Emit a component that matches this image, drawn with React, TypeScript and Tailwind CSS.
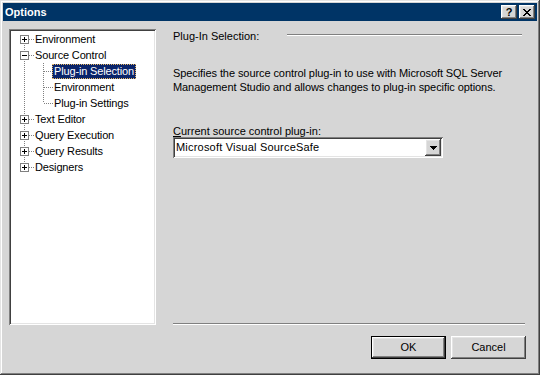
import React from "react";

const raised =
  "shadow-[inset_-1px_-1px_#404040,inset_1px_1px_#ffffff,inset_-2px_-2px_#808080,inset_2px_2px_#e4e4e4]";
const sunken =
  "shadow-[inset_1px_1px_#808080,inset_-1px_-1px_#ffffff,inset_2px_2px_#404040,inset_-2px_-2px_#e4e4e4]";

type Node = {
  label: string;
  level: number;
  box?: "plus" | "minus";
  selected?: boolean;
  first?: boolean;
  last?: boolean;
  lastChild?: boolean;
};

const nodes: Node[] = [
  { label: "Environment", level: 0, box: "plus", first: true },
  { label: "Source Control", level: 0, box: "minus" },
  { label: "Plug-in Selection", level: 1, selected: true },
  { label: "Environment", level: 1 },
  { label: "Plug-in Settings", level: 1, lastChild: true },
  { label: "Text Editor", level: 0, box: "plus" },
  { label: "Query Execution", level: 0, box: "plus" },
  { label: "Query Results", level: 0, box: "plus" },
  { label: "Designers", level: 0, box: "plus", last: true },
];

function Cell({
  vTop,
  vBottom,
  horiz,
  box,
}: {
  vTop: boolean;
  vBottom: boolean;
  horiz: boolean;
  box?: "plus" | "minus";
}) {
  return (
    <svg width="19" height="16" className="shrink-0" shapeRendering="crispEdges">
      {vTop && (
        <line x1="9.5" y1="0" x2="9.5" y2="8" stroke="#808080" strokeDasharray="1 1" />
      )}
      {vBottom && (
        <line x1="9.5" y1="8" x2="9.5" y2="16" stroke="#808080" strokeDasharray="1 1" />
      )}
      {horiz && (
        <line x1="10" y1="8.5" x2="19" y2="8.5" stroke="#808080" strokeDasharray="1 1" />
      )}
      {box && (
        <g>
          <rect x="5.5" y="4.5" width="8" height="8" fill="#ffffff" stroke="#808080" />
          <line x1="7" y1="8.5" x2="12" y2="8.5" stroke="#000000" />
          {box === "plus" && <line x1="9.5" y1="6" x2="9.5" y2="11" stroke="#000000" />}
        </g>
      )}
    </svg>
  );
}

function TreeRow({ node }: { node: Node }) {
  return (
    <div className="flex h-[16px] items-center">
      {node.level === 0 ? (
        <Cell vTop={!node.first} vBottom={!node.last} horiz box={node.box} />
      ) : (
        <>
          <Cell vTop vBottom horiz={false} />
          <Cell vTop vBottom={!node.lastChild} horiz />
        </>
      )}
      <span
        className={
          node.selected
            ? "ml-[-1px] h-[15px] px-[1px] leading-[13px] tracking-[-0.15px] bg-[#0a246a] text-white border border-dotted border-[#e8b860]"
            : "ml-[-1px] h-[15px] px-[2px] leading-[15px] tracking-[-0.15px] text-black"
        }
      >
        {node.label}
      </span>
    </div>
  );
}

function Button({ label, isDefault }: { label: string; isDefault?: boolean }) {
  if (isDefault) {
    return (
      <div className="w-[75px] h-[23px] border border-black">
        <div className={`w-full h-full flex items-center justify-center bg-[#d6d6d6] ${raised}`}>
          {label}
        </div>
      </div>
    );
  }
  return (
    <div className={`w-[75px] h-[23px] flex items-center justify-center bg-[#d6d6d6] ${raised}`}>
      {label}
    </div>
  );
}

export default function App() {
  return (
    <div
      className="w-[540px] h-[375px] bg-[#d6d6d6] text-[11px] text-black flex flex-col p-[3px] shadow-[inset_-1px_-1px_#404040,inset_1px_1px_#e4e4e4,inset_-2px_-2px_#808080,inset_2px_2px_#ffffff]"
      style={{ fontFamily: '"Liberation Sans", Arial, sans-serif' }}
    >
      {/* caption */}
      <div className="h-[18px] bg-[#003466] flex items-center pl-[2px] pr-[2px]">
        <span className="text-white font-bold text-[11px] leading-[18px]">Options</span>
        <div className="flex-1" />
        <div className="flex gap-[2px]">
          <div className={`w-[16px] h-[14px] bg-[#d6d6d6] flex items-center justify-center font-bold text-[11px] leading-none ${raised}`}>
            ?
          </div>
          <div className={`w-[16px] h-[14px] bg-[#d6d6d6] flex items-center justify-center ${raised}`}>
            <svg width="8" height="7" viewBox="0 0 8 7" shapeRendering="crispEdges">
              <path d="M0 0h2v1h1v1h2V1h1V0h2v1H7v1H6v1H5v1h1v1h1v1h1v1H6V6H5V5H3v1H2v1H0V6h1V5h1V4h1V3H2V2H1V1H0z" fill="#000" />
            </svg>
          </div>
        </div>
      </div>

      {/* body */}
      <div className="flex pt-[8px] pl-[6px]">
        <div className={`w-[147px] h-[296px] bg-white p-[2px] ${sunken}`}>
          <div className="pl-[4px]">
            {nodes.map((n, i) => (
              <TreeRow key={i} node={n} />
            ))}
          </div>
        </div>

        <div className="ml-[17px] w-[352px] h-[296px] flex flex-col">
          <div className="flex justify-between mt-[1px] h-[13px] leading-[13px]">
            <span>Plug-In Selection:</span>
            <div className="w-[235px] mr-[3px] mt-[4px] h-[2px] border-t border-[#808080] border-b border-b-white" />
          </div>
          <p className="mt-[23px] leading-[14px] tracking-[-0.08px]">
            Specifies the source control plug-in to use with Microsoft SQL Server
            <br />
            Management Studio and allows changes to plug-in specific options.
          </p>
          <div className="mt-[31px] leading-[12px]">
            <span className="underline">C</span>urrent source control plug-in:
          </div>
          <div className={`mt-0 w-[270px] h-[21px] bg-white flex items-center p-[2px] ${sunken}`}>
            <span className="flex-1 pl-[1px] tracking-[0.2px]">Microsoft Visual SourceSafe</span>
            <div className={`w-[16px] h-[17px] bg-[#d6d6d6] flex items-center justify-center ${raised}`}>
              <svg width="7" height="4" viewBox="0 0 7 4" shapeRendering="crispEdges">
                <path d="M0 0h7v1H6v1H5v1H4v1H3V3H2V2H1V1H0z" fill="#000" />
              </svg>
            </div>
          </div>
          <div className="flex-1" />
          <div className="h-[2px] border-t border-[#808080] border-b border-b-white" />
        </div>
      </div>

      {/* buttons */}
      <div className="flex justify-end gap-[5px] mt-[11px] pr-[11px]">
        <Button label="OK" isDefault />
        <Button label="Cancel" />
      </div>
    </div>
  );
}
